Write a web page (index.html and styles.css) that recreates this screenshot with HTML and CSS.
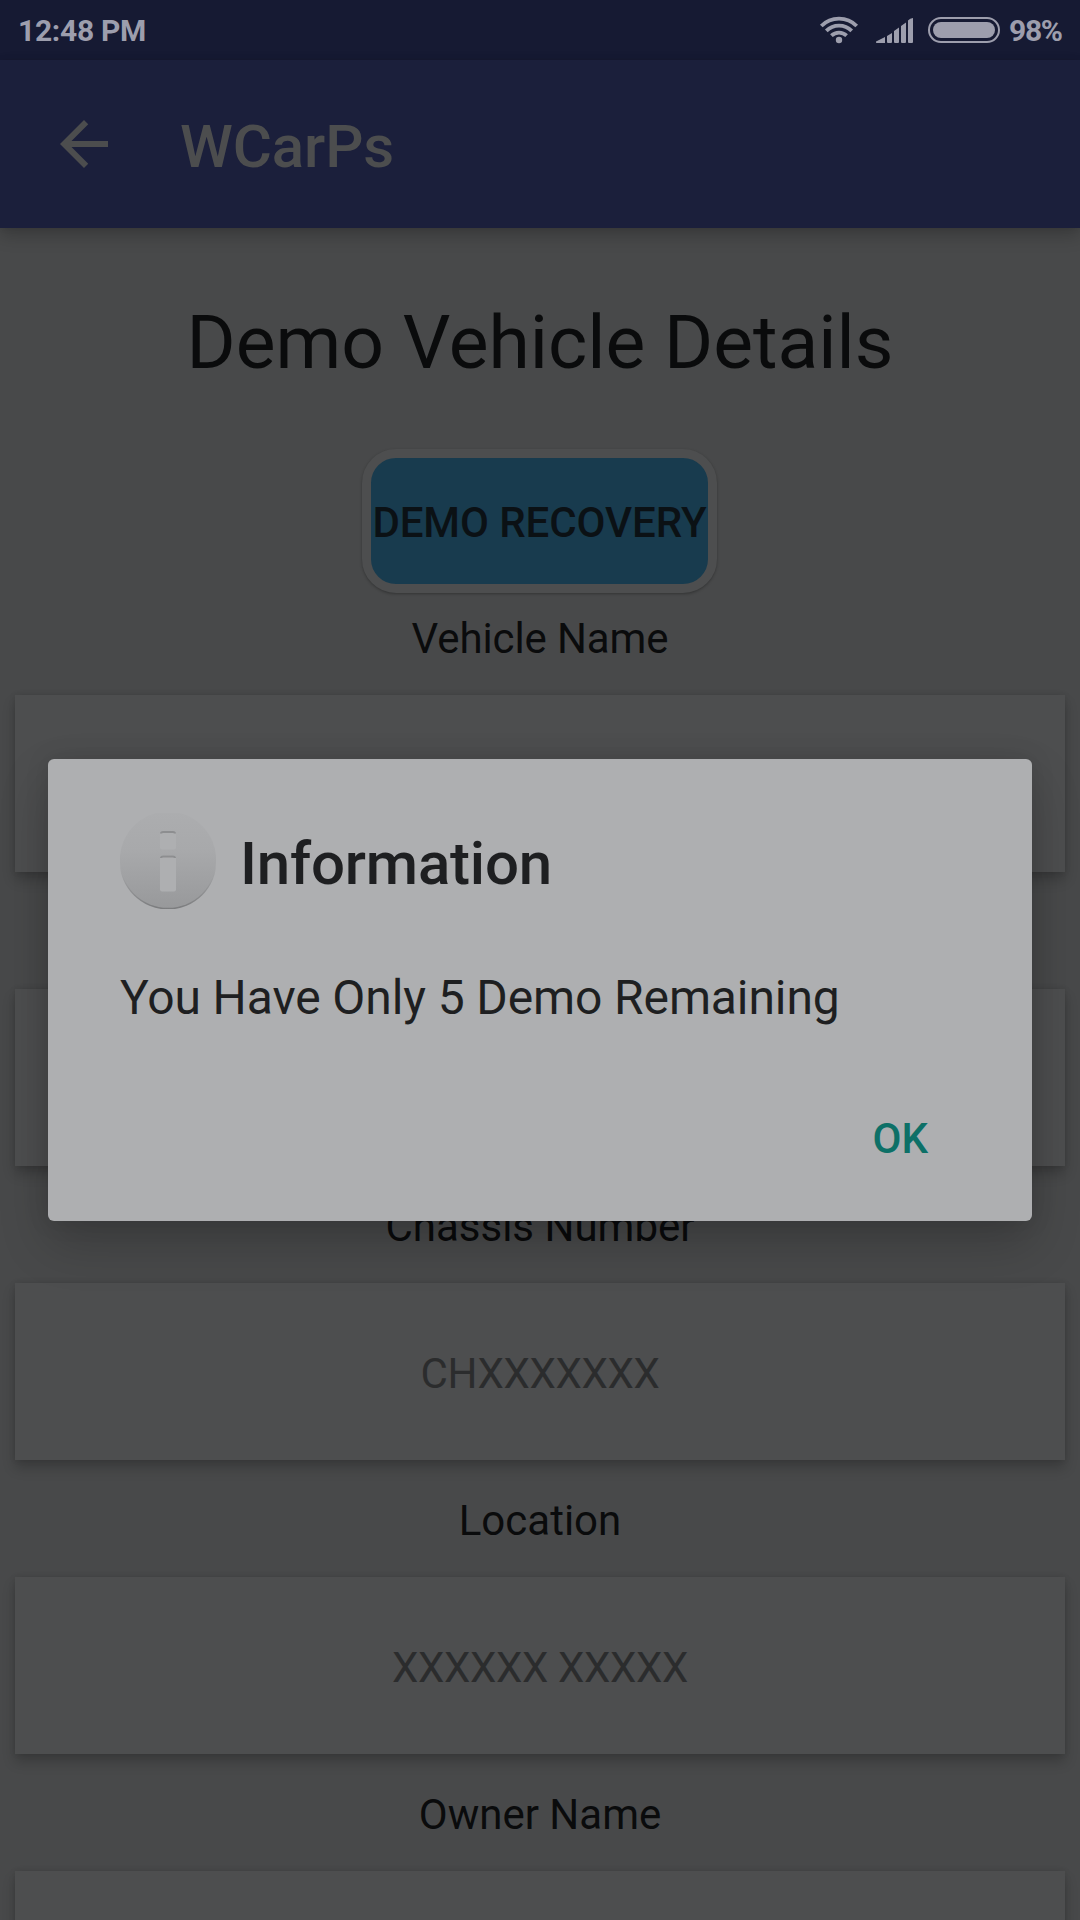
FILE: index.html
```html
<!DOCTYPE html>
<html lang="en">
<head>
<meta charset="utf-8">
<title>WCarPs</title>
<link rel="stylesheet" href="styles.css">
</head>
<body>
<div class="screen">
  <header class="status-bar">
    <span class="clock">12:48 PM</span>
    <div class="indicators">
      <svg class="wifi" width="40" height="30" viewBox="0 0 40 30">
        <g fill="none" stroke="currentColor" stroke-width="3.8">
          <path d="M2.3 11A25 25 0 0 1 37.7 11"/>
          <path d="M7.3 15.8A18 18 0 0 1 32.7 15.8"/>
          <path d="M12.4 20.6A11 11 0 0 1 27.6 20.6"/>
        </g>
        <circle cx="20" cy="25" r="3.2" fill="currentColor"/>
      </svg>
      <svg class="signal" width="37" height="25" viewBox="0 0 37 25" fill="currentColor">
        <path d="M0 24.5 0 23.5 9 19V25H.5ZM11 18 16 15V24Q16 25 15 25H12Q11 25 11 24ZM18 13 23 9.5V24Q23 25 22 25H19Q18 25 18 24ZM25 8 30 4.5V24Q30 25 29 25H26Q25 25 25 24ZM32 2.5Q34 .3 37 0V24Q37 25 36 25H33Q32 25 32 24Z"/>
      </svg>
      <div class="battery"><div class="battery-level"></div></div>
      <span class="percent">98%</span>
    </div>
  </header>
  <nav class="app-bar">
    <svg class="back" width="48" height="48" viewBox="4 4 16 16" fill="currentColor">
      <path d="M20 11H7.83l5.59-5.59L12 4l-8 8 8 8 1.41-1.41L7.83 13H20v-2z"/>
    </svg>
    <h1 class="app-title">WCarPs</h1>
  </nav>
  <main class="content">
    <h2 class="heading">Demo Vehicle Details</h2>
    <button class="recovery">DEMO RECOVERY</button>
    <div class="label">Vehicle Name</div>
    <div class="card"></div>
    <div class="label"></div>
    <div class="card"></div>
    <div class="label">Chassis Number</div>
    <div class="card">CHXXXXXXX</div>
    <div class="label">Location</div>
    <div class="card">XXXXXX XXXXX</div>
    <div class="label">Owner Name</div>
    <div class="card"></div>
  </main>
  <section class="dialog" role="dialog">
    <div class="dialog-head">
      <svg class="info" width="96" height="96" viewBox="0 0 96 96">
        <defs>
          <linearGradient id="disc" x1="0" y1="0" x2="0" y2="1">
            <stop offset="0" stop-color="#acadaf"/>
            <stop offset=".4" stop-color="#a8a9ab"/>
            <stop offset="1" stop-color="#98999b"/>
          </linearGradient>
          <linearGradient id="rim" x1="0" y1="0" x2="0" y2="1">
            <stop offset=".5" stop-color="#7f8082" stop-opacity="0"/>
            <stop offset="1" stop-color="#7a7b7d"/>
          </linearGradient>
          <clipPath id="edge"><rect width="96" height="96"/></clipPath>
        </defs>
        <g clip-path="url(#edge)">
          <circle cx="48" cy="48" r="48.5" fill="url(#rim)"/>
          <circle cx="48" cy="46.7" r="48.1" fill="url(#disc)"/>
        </g>
        <rect x="40" y="18" width="16" height="18.500" rx="2" fill="#aeafb1"/>
        <rect x="40" y="42.500" width="16" height="36" rx="2" fill="#aeafb1"/>
        <path d="M41 20.5Q41 19 43 19H53Q55 19 55 20.5M41 45Q41 43.500 43 43.500H53Q55 43.500 55 45" fill="none" stroke="#8d8e90" stroke-width="2"/>
      </svg>
      <h3 class="dialog-title">Information</h3>
    </div>
    <p class="message">You Have Only 5 Demo Remaining</p>
    <div class="actions"><button class="ok">OK</button></div>
  </section>
</div>
</body>
</html>
```
FILE: styles.css
```css
* { box-sizing: border-box; margin: 0; padding: 0; }
body { font-family: Roboto, sans-serif; background: #48494a; }
button { border: 0; background: none; font: inherit; }
.screen {
  position: relative;
  display: flex;
  flex-direction: column;
  width: 1080px;
  height: 1920px;
  overflow: hidden;
  background: #48494a;
}
.status-bar {
  display: flex;
  justify-content: space-between;
  height: 60px;
  padding: 0 18px;
  background: #161a33;
  color: #9d9ead;
  font-size: 30px;
  font-weight: 700;
  line-height: 62px;
}
.clock { letter-spacing: -.3px; }
.indicators { display: flex; }
.wifi { margin: 15px 17px 0 0; }
.signal { margin: 18px 15px 0 0; }
.battery {
  width: 72px;
  height: 26px;
  margin-top: 17px;
  padding: 3px;
  border: 2px solid #9d9ead;
  border-radius: 13px;
}
.battery-level { height: 100%; border-radius: 8px; background: #9d9ead; }
.percent { width: 53px; margin-left: 9px; letter-spacing: -1.300px; white-space: nowrap; }
.app-bar {
  position: relative;
  flex: none;
  display: flex;
  align-items: center;
  height: 168px;
  padding-left: 60px;
  background: #1b1f3b;
  color: #4c4d4e;
  box-shadow: 0 8px 16px rgba(0, 0, 0, .2), 0 0 6px rgba(0, 0, 0, .1);
}
.app-title { margin: 5px 0 0 72px; font-size: 60px; font-weight: 500; letter-spacing: -.1px; }
.content { display: flex; flex-direction: column; align-items: center; color: #0a0b0c; }
.heading { height: 221px; padding-top: 70px; font-size: 75px; font-weight: 400; line-height: 88px; white-space: nowrap; }
.recovery {
  width: 355px;
  height: 144px;
  margin-right: 1px;
  padding-top: 3px;
  border: 9px solid #4d4e4f;
  border-radius: 34px;
  background: #183b4e;
  box-shadow: 0 1px 3px rgba(0, 0, 0, .3);
  color: #0b1115;
  font-size: 42px;
  font-weight: 500;
  line-height: 123px;
  letter-spacing: -.08px;
  white-space: nowrap;
}
.label { height: 117px; padding-top: 21px; font-size: 42px; line-height: 50px; }
.recovery + .label { height: 102px; letter-spacing: -.1px; }
.card {
  flex: none;
  width: 1050px;
  height: 177px;
  padding-top: 2px;
  background: #4d4e4f;
  box-shadow: 0 8px 12px rgba(0, 0, 0, .2), 0 0 6px rgba(0, 0, 0, .1);
  color: #2b2c2d;
  font-size: 42px;
  line-height: 177px;
  letter-spacing: -.33px;
  text-align: center;
}
.card + .label { padding-top: 36px; }
.dialog {
  position: absolute;
  left: 48px;
  top: 759px;
  width: 984px;
  height: 462px;
  padding: 54px 72px 0;
  border-radius: 6px;
  background: #aeafb1;
  box-shadow: 0 22px 50px rgba(0, 0, 0, .2), 0 0 24px rgba(0, 0, 0, .1);
  color: #1e1f21;
}
.dialog-head { display: flex; align-items: center; gap: 24px; height: 96px; }
.dialog-title { padding-top: 4px; font-size: 60px; font-weight: 500; letter-spacing: -.2px; }
.message { margin-top: 61px; font-size: 48px; line-height: 56px; letter-spacing: -.11px; }
.actions { display: flex; justify-content: flex-end; margin-top: 88px; padding-right: 32px; }
.ok { color: #0d7067; font-size: 42px; font-weight: 500; line-height: 50px; }
```
